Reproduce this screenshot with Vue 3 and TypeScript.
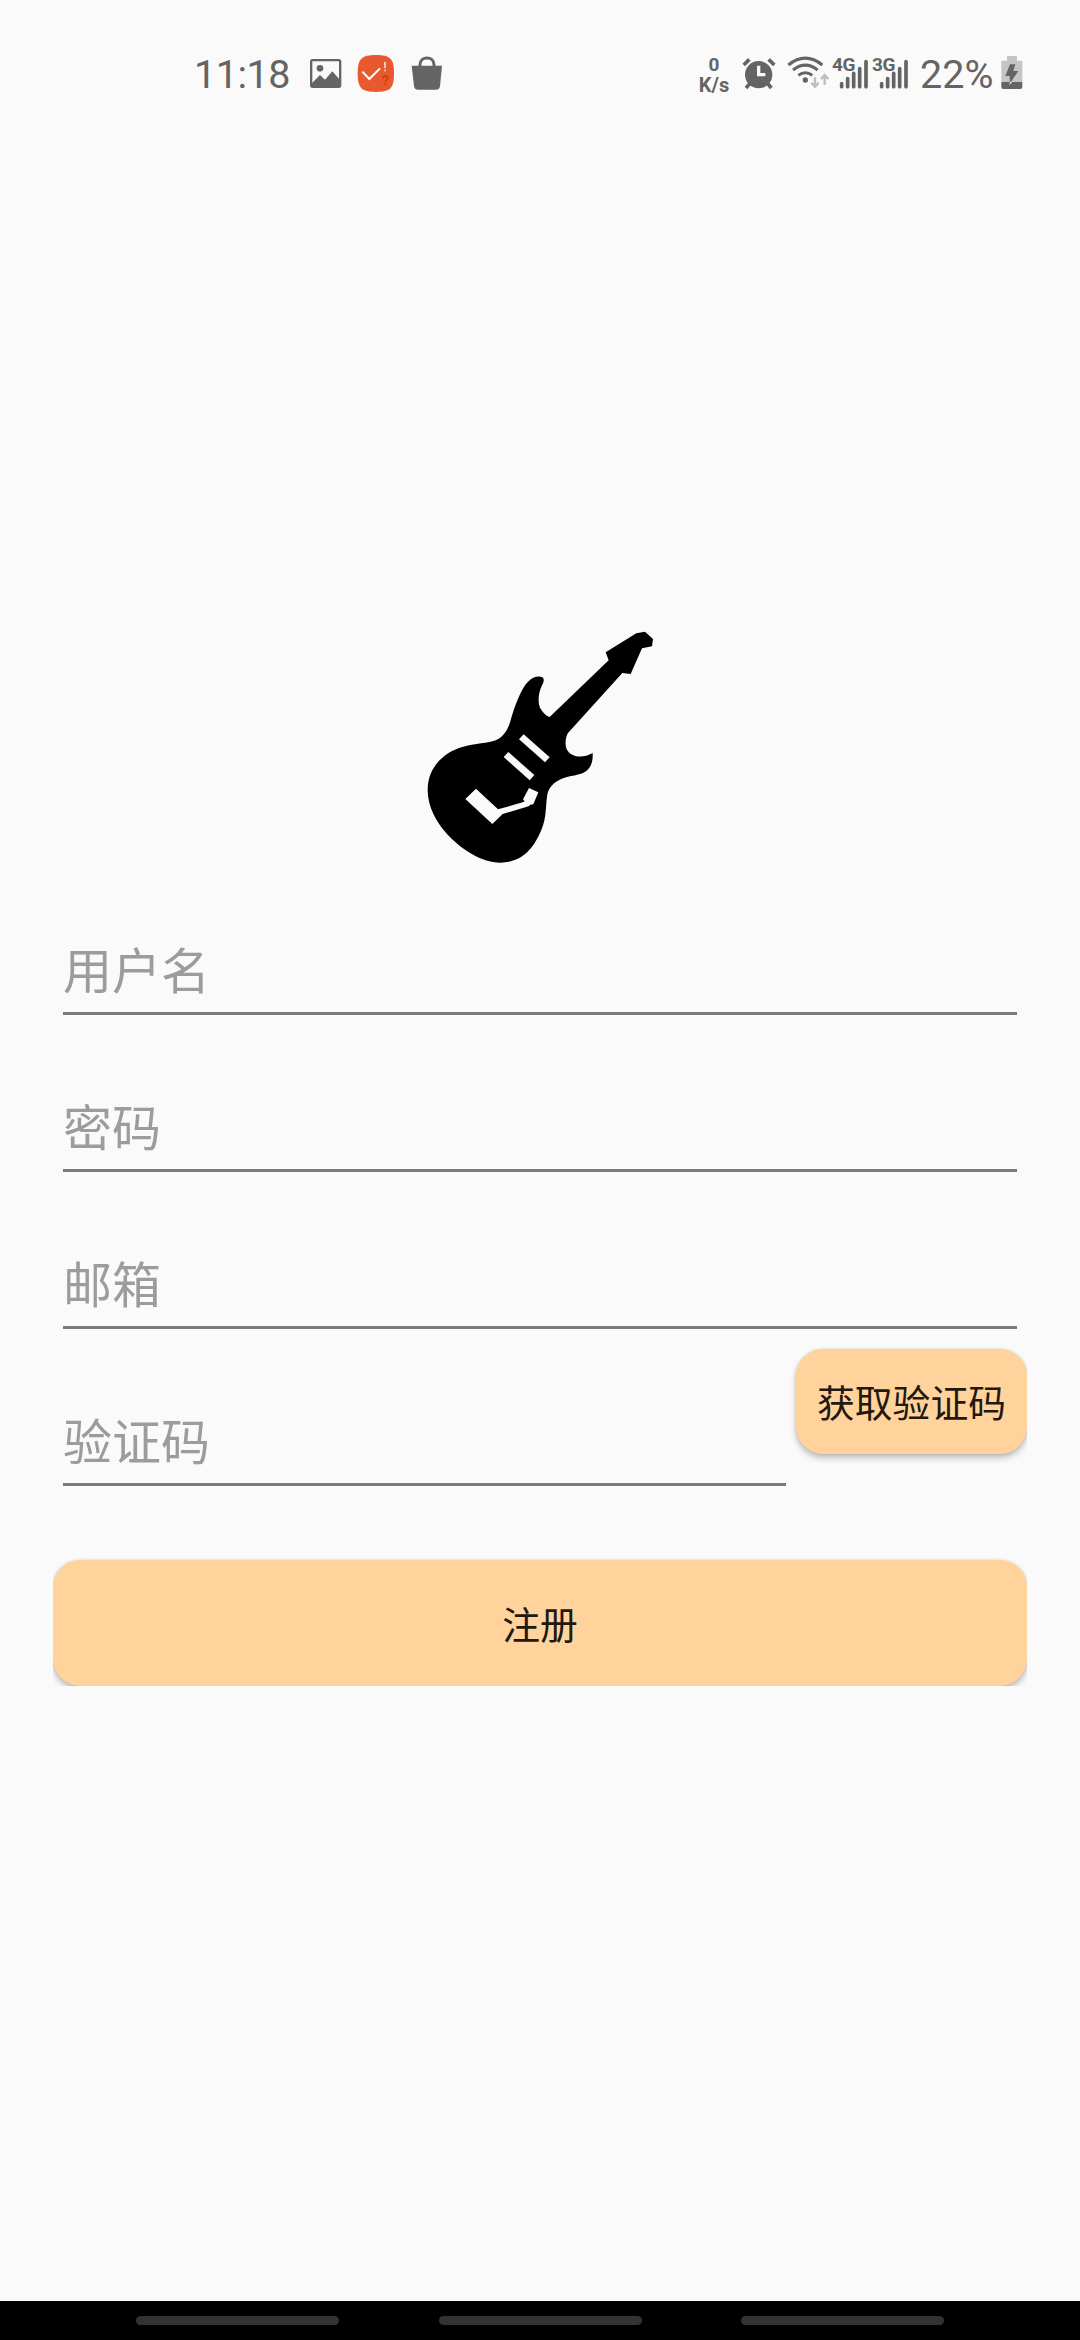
<script setup lang="ts">
import { ref } from 'vue'

interface Field {
  key: string
  label: string
}

const fields: Field[] = [
  { key: 'username', label: '用户名' },
  { key: 'password', label: '密码' },
  { key: 'email', label: '邮箱' },
]

const networks = ref<string[]>(['4G', '3G'])
</script>

<template>
  <main class="screen">
    <header class="status">
      <span class="clock">11:18</span>
      <svg class="i-image" width="34" height="70" viewBox="388 0 102 210">
        <path fill="#646464" fill-rule="evenodd" d="M399 57H477Q485 57 485 65V136Q485 144 477 144H399Q391 144 391 136V65Q391 57 399 57ZM398 64V128L421 105L436 119L458 94L478 116V64Z" />
        <circle cx="421" cy="85" r="10" fill="#646464" />
      </svg>
      <svg class="i-task" width="38" height="70" viewBox="531 0 114 210">
        <path fill="#e9592f" d="M588 45C631 45 642 56 642 100C642 145 631 156 588 156C545 156 533 145 533 100C533 56 545 45 588 45Z" />
        <path d="M547 95L568 117L600 85" fill="none" stroke="#fff" stroke-width="6" />
        <path d="M615 66V85M615 89V94" stroke="#fbe0d6" stroke-width="5" />
        <path d="M609 115C609 106 623 106 623 114C623 120 616 119 616 126M616 130V135" fill="none" stroke="#c63f05" stroke-width="5" />
      </svg>
      <svg class="i-bag" width="32" height="70" viewBox="693 0 96 210">
        <path d="M720 80V74C720 47 762 47 762 74V80" fill="none" stroke="#646464" stroke-width="9" />
        <path fill="#646464" d="M695 77H786L780 138Q779 149 768 149H714Q703 149 702 138Z" />
      </svg>

      <div class="speed">
        <span class="rate">0</span>
        <span class="unit">K/s</span>
      </div>
      <svg class="i-alarm" width="34" height="70" viewBox="187 0 102 210">
        <g stroke="#646464" stroke-width="11">
          <path d="M192 75L209 58M284 75L267 58" />
          <path d="M199 144L213 128M275 144L262 128" />
        </g>
        <circle cx="237" cy="104" r="41" fill="#646464" />
        <path d="M237 77V104H257" fill="none" stroke="#fafafa" stroke-width="10" />
      </svg>
      <svg class="i-wifi" width="43" height="70" viewBox="321 0 129 210">
        <g fill="none" stroke="#646464" stroke-width="9">
          <path d="M325 75Q376 34 427 75" />
          <path d="M339 90Q376 61 413 90" />
          <path d="M355 106Q376 90 397 106" />
        </g>
        <circle cx="376" cy="120" r="8" fill="#646464" />
        <g fill="none" stroke="#bdbdbd" stroke-width="7">
          <path d="M405 112V139M394 128L405 140L416 128" />
          <path d="M434 135V106M423 117L434 105L445 117" />
        </g>
      </svg>
      <div v-for="n in networks" :key="n" class="signal">
        <svg width="40" height="70" viewBox="33 0 120 210">
          <g stroke="#646464" stroke-width="11" stroke-linecap="round">
            <path d="M65 131V140M83 116V140M101 100V140M119 86V140M138 65V140" />
          </g>
        </svg>
        <span class="gen">{{ n }}</span>
      </div>
      <span class="percent">22%</span>
      <svg class="i-battery" width="22" height="70" viewBox="542 0 66 210">
        <path fill="#c4c4c4" d="M560 48H590V62H606V126H543V62H560Z" />
        <path fill="#646464" d="M543 126H606V141Q606 147 600 147H549Q543 147 543 141Z" />
        <path fill="#646464" d="M569 73H585L579 93H594L569 130L568 108H555Z" />
        <path fill="#fafafa" d="M569 126H575L567 136Z" />
      </svg>
    </header>

    <svg class="logo" width="260" height="270" viewBox="0 0 780 810">
      <path
        d="M53 540C53 465 110 424 157 411C195 400 236 400 257 391C281 380 294 359 301 334C313 290 333 236 354 215C368 200 386 196 397 202C405 208 400 219 395 228C385 250 383 275 390 293C397 306 407 317 419 321L596 151L587 127L679 70L705 65L729 87L726 109L696 115L662 192L637 189L474 369C466 382 464 407 471 419C483 440 515 448 548 429C549 450 545 470 530 482C510 497 478 496 455 506C431 517 414 532 411 560C407 590 409 622 396 655C381 693 350 758 271 758C213 758 152 716 111 672C78 636 53 589 53 540Z"
      />
      <g fill="#fafafa">
        <path d="M341 373L419 442L405 457L327 388Z" />
        <path d="M295 426L373 495L359 511L281 441Z" />
        <path d="M198 536L264 598L338 577L344 574L339 568L357 534L385 547L370 583L361 584L356 589L278 612L247 642L166 567Z" />
      </g>
    </svg>

    <form class="form" @submit.prevent>
      <label v-for="f in fields" :key="f.key" class="field">{{ f.label }}</label>
      <div class="code-row">
        <label class="field">验证码</label>
        <div class="send-clip">
          <button type="button" class="btn send">获取验证码</button>
        </div>
      </div>
      <div class="submit-clip">
        <button type="submit" class="btn submit">注册</button>
      </div>
    </form>

    <nav class="nav">
      <i v-for="n in 3" :key="n" class="pill"></i>
    </nav>
  </main>
</template>

<style>
body {
  background: #fafafa;
}
</style>

<style scoped>
.screen {
  width: 1080px;
  height: 2340px;
  display: flex;
  flex-direction: column;
  background: #fafafa;
  overflow: hidden;
  font-family: Roboto, "Noto Sans CJK SC", sans-serif;
}
svg {
  display: block;
  flex: none;
}
.status {
  height: 70px;
  padding: 40px 0 0 194px;
  display: flex;
  color: #646464;
}
.clock,
.percent {
  font-size: 39.5px;
  line-height: 69px;
  white-space: nowrap;
}
.clock {
  width: 115px;
  letter-spacing: -0.5px;
}
.i-task {
  margin-left: 14px;
}
.i-bag {
  margin-left: 16px;
}
.speed {
  width: 40px;
  margin-left: 251px;
  padding-top: 15px;
  display: flex;
  flex-direction: column;
  align-items: center;
  font-weight: 700;
  font-size: 20px;
  line-height: 20px;
}
.rate {
  font-size: 19px;
}
.i-alarm {
  margin-left: 8px;
}
.i-wifi {
  margin-left: 11px;
  margin-right: 1px;
}
.signal {
  position: relative;
  width: 40px;
}
.gen {
  position: absolute;
  left: 1px;
  top: 14px;
  font-size: 19px;
  line-height: 22px;
  font-weight: 700;
  letter-spacing: -0.4px;
}
.percent {
  width: 80px;
  margin-left: 9px;
}
.i-battery {
  margin-left: 1px;
}
.logo {
  margin: 500px 0 0 410px;
}
.form {
  padding: 0 53px;
  display: flex;
  flex-direction: column;
}
.field {
  box-sizing: border-box;
  height: 157px;
  margin: 0 10px;
  padding-top: 75px;
  border-bottom: 3px solid #7b7b7b;
  color: #9c9c9c;
  font-family: "Noto Sans CJK SC", sans-serif;
  font-size: 49px;
  font-weight: 400;
  line-height: 70px;
}
.form > .field:first-child {
  height: 135px;
  padding-top: 53px;
}
.code-row {
  display: flex;
  height: 157px;
}
.code-row .field {
  width: 723px;
  flex: none;
}
.send-clip {
  width: 231px;
  height: 135px;
  padding: 20px 0 0 10px;
  margin-left: -10px;
  overflow: hidden;
  flex: none;
}
.btn {
  box-sizing: border-box;
  display: flex;
  align-items: center;
  justify-content: center;
  margin: 0;
  padding: 0 0 2px;
  border: 0;
  border-radius: 27px;
  background: #ffd39b;
  color: #21190f;
  font-family: "Noto Sans CJK SC", sans-serif;
  font-size: 37.8px;
  white-space: nowrap;
  box-shadow: 0 4px 6px rgba(0, 0, 0, 0.24), 0 0 3px rgba(0, 0, 0, 0.12);
}
.send {
  width: 231px;
  height: 105px;
}
.submit-clip {
  height: 130px;
  margin-top: 70px;
  padding-top: 4px;
  box-sizing: border-box;
  overflow: hidden;
}
.submit {
  width: 974px;
  height: 126px;
}
.nav {
  box-sizing: border-box;
  height: 39px;
  margin-top: auto;
  padding: 15px 136px 0;
  display: flex;
  justify-content: space-between;
  background: #000;
}
.pill {
  width: 203px;
  height: 9px;
  border-radius: 5px;
  background: #333;
}
</style>
